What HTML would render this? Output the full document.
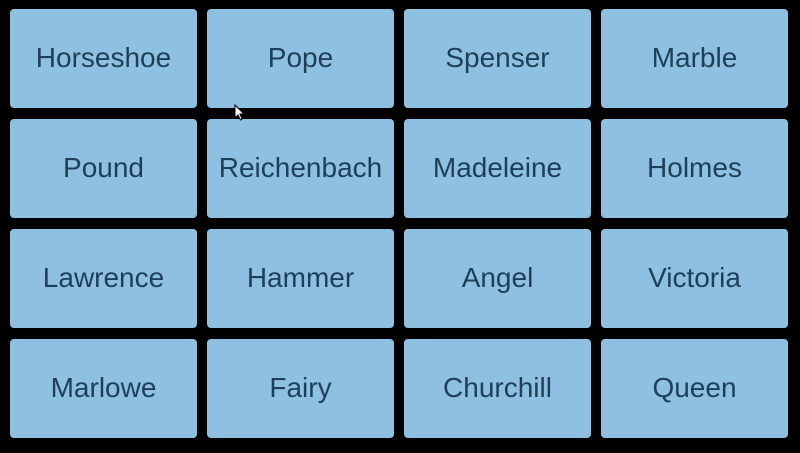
<!DOCTYPE html>
<html><head><style>
html,body{margin:0;padding:0;background:#000;width:800px;height:453px;overflow:hidden}
.t{position:absolute;width:187px;height:97px;padding-bottom:2px;background:#8ec1e1;border-radius:4px;display:flex;align-items:center;justify-content:center;font-family:"Liberation Sans",sans-serif;font-size:28px;color:#1f3f58}
</style></head><body>
<div class="t" style="left:10px;top:9px">Horseshoe</div>
<div class="t" style="left:207px;top:9px">Pope</div>
<div class="t" style="left:404px;top:9px">Spenser</div>
<div class="t" style="left:601px;top:9px">Marble</div>
<div class="t" style="left:10px;top:119px">Pound</div>
<div class="t" style="left:207px;top:119px">Reichenbach</div>
<div class="t" style="left:404px;top:119px">Madeleine</div>
<div class="t" style="left:601px;top:119px">Holmes</div>
<div class="t" style="left:10px;top:229px">Lawrence</div>
<div class="t" style="left:207px;top:229px">Hammer</div>
<div class="t" style="left:404px;top:229px">Angel</div>
<div class="t" style="left:601px;top:229px">Victoria</div>
<div class="t" style="left:10px;top:339px">Marlowe</div>
<div class="t" style="left:207px;top:339px">Fairy</div>
<div class="t" style="left:404px;top:339px">Churchill</div>
<div class="t" style="left:601px;top:339px">Queen</div>
<svg style="position:absolute;left:234px;top:104px" width="12" height="18" viewBox="0 0 12 18"><path d="M1 1 L1 14 L4 11 L6.5 16 L8 15 L6 10 L10 10 Z" fill="#fff" stroke="#000" stroke-width="1"/></svg>
</body></html>
